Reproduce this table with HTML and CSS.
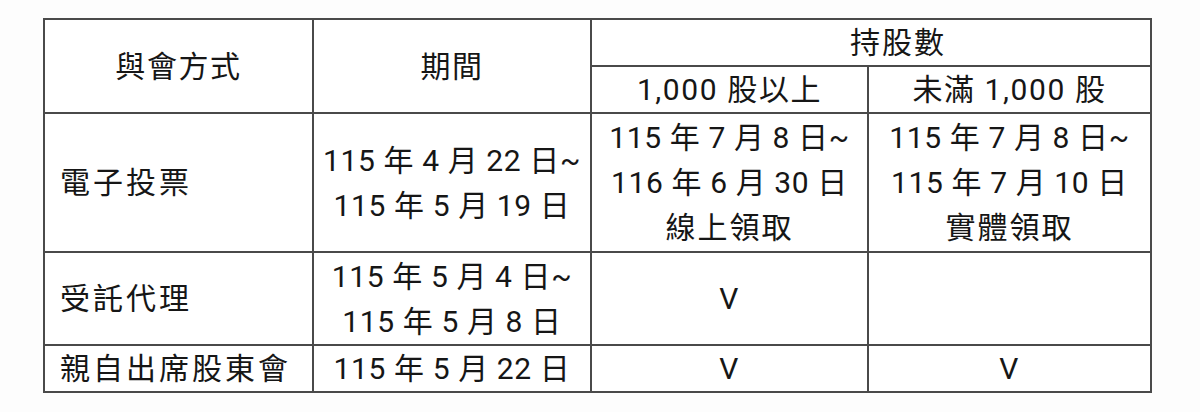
FILE: index.html
```html
<!DOCTYPE html>
<html lang="zh-Hant">
<head>
<meta charset="utf-8">
<title>與會方式</title>
<link rel="stylesheet" href="styles.css">
</head>
<body>
<table class="grid">
  <colgroup>
    <col class="c1"><col class="c2"><col class="c3"><col class="c4">
  </colgroup>
  <tr class="h1">
    <td rowspan="2">與會方式</td>
    <td rowspan="2">期間</td>
    <td colspan="2" class="shares">持股數</td>
  </tr>
  <tr class="h2">
    <td>1,000 股以上</td>
    <td>未滿 1,000 股</td>
  </tr>
  <tr class="r1">
    <td class="method">電子投票</td>
    <td class="date">115 年 4 月 22 日~<br>115 年 5 月 19 日</td>
    <td class="date">115 年 7 月 8 日~<br>116 年 6 月 30 日<br><span class="note">線上領取</span></td>
    <td class="date">115 年 7 月 8 日~<br>115 年 7 月 10 日<br><span class="note">實體領取</span></td>
  </tr>
  <tr class="r2">
    <td class="method">受託代理</td>
    <td class="date">115 年 5 月 4 日~<br>115 年 5 月 8 日</td>
    <td>V</td>
    <td></td>
  </tr>
  <tr class="r3">
    <td class="method">親自出席股東會</td>
    <td class="date">115 年 5 月 22 日</td>
    <td>V</td>
    <td>V</td>
  </tr>
</table>
</body>
</html>
```

FILE: styles.css
```css
html, body {
  margin: 0;
  padding: 0;
  background: #fdfdfd;
}
body {
  padding: 18px 0 0 43px;
  font-family: Roboto, "Noto Sans CJK TC", sans-serif;
  color: #161616;
}
.grid {
  border-collapse: collapse;
  table-layout: fixed;
  width: 1109px;
  font-size: 30px;
  letter-spacing: 1.6px;
  background: #ffffff;
}
.c1 { width: 269px; }
.c2 { width: 278px; }
.c3 { width: 277px; }
.c4 { width: 283px; }
.grid td {
  border: 2px solid #4a4a4a;
  padding: 0;
  text-align: center;
  vertical-align: middle;
  line-height: 45px;
}
.h1 td, .h2 td, .r3 td { height: 45px; }
.r1 td { height: 137px; }
.r2 td { height: 91px; }
.grid td.method {
  text-align: left;
  padding-left: 15px;
  letter-spacing: 3px;
}
.grid td.date {
  letter-spacing: 0.6px;
}
.grid td.date .note {
  letter-spacing: 2px;
}
.grid td.shares {
  padding-left: 54px;
  letter-spacing: 2px;
}
```
